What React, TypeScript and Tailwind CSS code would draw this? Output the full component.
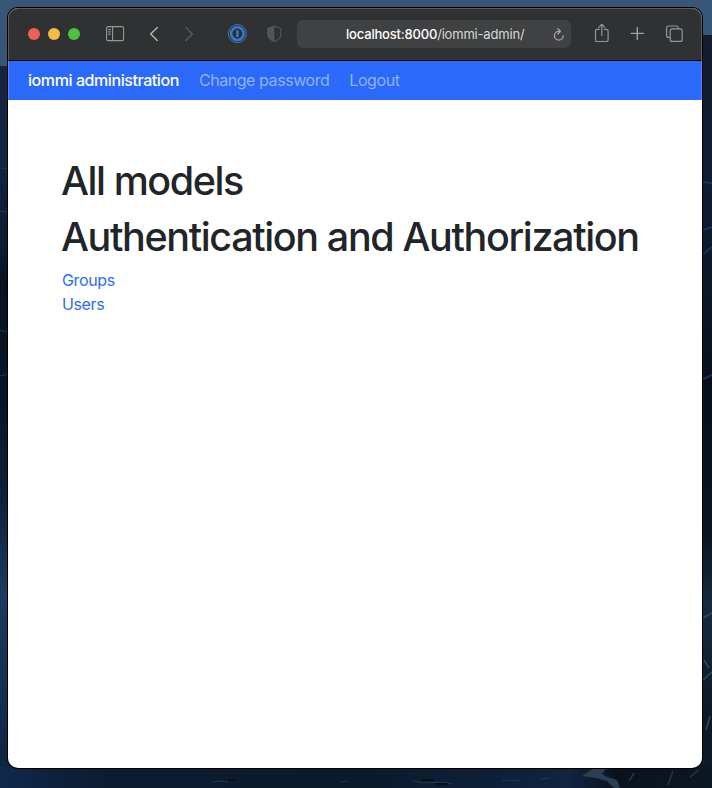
import React from "react";

function Wallpaper() {
  return (
    <svg className="absolute inset-0" width="712" height="788" viewBox="0 0 712 788" aria-hidden="true">
      <defs>
        <linearGradient id="sky" x1="0" y1="0" x2="0" y2="1">
          <stop offset="0" stopColor="#385678" />
          <stop offset="1" stopColor="#34506f" />
        </linearGradient>
        <linearGradient id="left" x1="0" y1="0" x2="0" y2="1">
          <stop offset="0" stopColor="#17233b" />
          <stop offset="0.12" stopColor="#122543" />
          <stop offset="0.26" stopColor="#0e1a2f" />
          <stop offset="0.3" stopColor="#0a1222" />
          <stop offset="0.46" stopColor="#081427" />
          <stop offset="0.62" stopColor="#10243d" />
          <stop offset="0.73" stopColor="#1b3c60" />
          <stop offset="0.88" stopColor="#132e50" />
          <stop offset="1" stopColor="#0c2038" />
        </linearGradient>
        <linearGradient id="right" x1="0" y1="0" x2="0" y2="1">
          <stop offset="0" stopColor="#141c2e" />
          <stop offset="0.2" stopColor="#0e1b33" />
          <stop offset="0.34" stopColor="#0d1828" />
          <stop offset="0.46" stopColor="#070f1a" />
          <stop offset="0.66" stopColor="#0a1420" />
          <stop offset="0.76" stopColor="#172b3f" />
          <stop offset="0.9" stopColor="#0d1825" />
          <stop offset="1" stopColor="#0c1a2b" />
        </linearGradient>
        <linearGradient id="sea" x1="0" y1="0" x2="1" y2="0">
          <stop offset="0" stopColor="#10284a" />
          <stop offset="0.15" stopColor="#0c1b30" />
          <stop offset="0.5" stopColor="#0a192b" />
          <stop offset="0.8" stopColor="#102440" />
          <stop offset="0.87" stopColor="#0a121d" />
          <stop offset="1" stopColor="#0c1724" />
        </linearGradient>
      </defs>
      <rect width="712" height="788" fill="url(#sky)" />
      <rect y="66" width="10" height="722" fill="url(#left)" />
      <rect x="700" y="35" width="12" height="753" fill="url(#right)" />
      <rect y="766" width="712" height="22" fill="url(#sea)" />
      <path d="M0 168l7 1M0 211l7 1M0 330l7 2M0 376l7 -2" stroke="#203a58" strokeWidth="1" />
      <path d="M703 182l9 1M703 230l9 -3M703 254l9 -7M703 379l9 -4" stroke="#1b334e" strokeWidth="2" />
      <path d="M703 618l9 -5M703 680l9 -8M706 730l4 -14M704 660l5 8" stroke="#304a60" strokeWidth="1.5" />
      <path d="M592 769h14l-4 5 5 3 10 3 3 8h-6l-7 -7 -11 -3 -14 -2z" fill="#2b3e52" />
      <path d="M502 781l8 -1 10 1M540 779l10 -1M340 782l8 -1M212 782l8 -1 8 1M413 781l10 2 20 -1 10 2" stroke="#24394f" fill="none" />
      <path d="M422 780h12M228 780h8M436 784h12" stroke="#06101c" strokeWidth="2" />
      <path d="M629 781l5 -8M668 785l5 -14M690 777l9 -7" stroke="#22364a" strokeWidth="1.5" />
    </svg>
  );
}

function Toolbar() {
  return (
    <div className="relative flex h-[53px] items-center border-b border-black bg-[#303132]">
      <div className="ml-5 flex gap-2">
        <i className="size-3 rounded-full bg-[#ee6156]" />
        <i className="size-3 rounded-full bg-[#f5bc42]" />
        <i className="size-3 rounded-full bg-[#4fc141]" />
      </div>
      <svg className="ml-[25px]" width="20" height="18" viewBox="105 25 20 18" fill="none" stroke="#969798" strokeWidth="1.1">
        <rect x="106.6" y="26.6" width="17" height="14" rx="1.7" />
        <path d="M112.6 26.6v14M108.2 29.5h2.6M108.2 31.9h2.6M108.2 34.3h2.6" />
      </svg>
      <svg className="ml-6" width="12" height="18" viewBox="149 25 12 18" fill="none" stroke="#b0b1b1" strokeWidth="1.5" strokeLinecap="round" strokeLinejoin="round">
        <path d="M157.3 27.5l-6.6 6.5 6.6 6.5" />
      </svg>
      <svg className="ml-[22px]" width="12" height="18" viewBox="183 25 12 18" fill="none" stroke="#59595a" strokeWidth="1.5" strokeLinecap="round" strokeLinejoin="round">
        <path d="M185.8 27.5l6.6 6.5-6.6 6.5" />
      </svg>
      <svg className="ml-8" width="20" height="20" viewBox="227 24 20 20" fill="none" stroke="#3a7bd0">
        <circle cx="237.4" cy="33.6" r="9" strokeWidth="1" />
        <circle cx="237.4" cy="33.6" r="6.3" strokeWidth="2.5" />
        <path d="M237.4 30.3v6.6" strokeWidth="2.3" />
      </svg>
      <svg className="ml-[19px]" width="16" height="18" viewBox="266 25 16 18">
        <path d="M274.3 26.2l6.5 2.2v6.4c0 3.2-2.7 5.2-6.5 6.8-3.8-1.6-6.5-3.6-6.5-6.8v-6.4z" fill="none" stroke="#545556" strokeWidth="1.2" />
        <path d="M274.3 26.2v15.4c-3.8-1.6-6.5-3.6-6.5-6.8v-6.4z" fill="#545556" />
      </svg>
      <div className="ml-[15px] flex h-7 w-[274px] items-center rounded-md bg-[#404142] pr-1.5 pl-[49px]">
        <span className="text-[13px] leading-7 tracking-[-0.19px] text-[#d9d9d9]">
          <span className="font-medium text-white">localhost:8000</span>/iommi-admin/
        </span>
        <svg className="ml-auto" width="12" height="14" viewBox="553 27 12 14" fill="none" stroke="#a6a6a7" strokeWidth="1.3" strokeLinecap="round" strokeLinejoin="round">
          <path d="M560 31.4h-1.2a4.4 4.4 0 1 0 4.4 4.4M557.9 28.8l2.6 2.6-2.6 2.6" />
        </svg>
      </div>
      <svg className="ml-[23px]" width="16" height="20" viewBox="594 24 16 20" fill="none" stroke="#969798" strokeWidth="1.2" strokeLinecap="round" strokeLinejoin="round">
        <path d="M599.3 29.3h-2.2c-1 0-1.6.6-1.6 1.6v9c0 1 .6 1.6 1.6 1.6h9.4c1 0 1.6-.6 1.6-1.6v-9c0-1-.6-1.6-1.6-1.6h-2.2M601.8 35.4v-11M598.8 27.3l3-3 3 3" />
      </svg>
      <svg className="ml-5" width="14" height="14" viewBox="630 27 14 14" stroke="#a0a1a2" strokeWidth="1.4" strokeLinecap="round">
        <path d="M631.3 33.4h12M637.3 27.4v12" />
      </svg>
      <svg className="ml-[21px]" width="19" height="19" viewBox="665 25 19 19" fill="none" stroke="#969798" strokeWidth="1.2">
        <rect x="670.2" y="28.8" width="12" height="12.6" rx="2" />
        <path d="M670 37.4h-1.4c-1.2 0-2-.8-2-2v-7.4c0-1.2.8-2 2-2h7.6c1.2 0 2 .8 2 2v.8" />
      </svg>
    </div>
  );
}

export default function App() {
  return (
    <div className="relative h-[788px] w-[712px] overflow-hidden font-['Inter','Liberation_Sans',sans-serif]">
      <Wallpaper />
      <div className="relative mt-2 ml-2 h-[760px] w-[694px] overflow-hidden rounded-[10px] bg-white [box-shadow:0_0_0_1px_#000]">
        <Toolbar />
        <nav className="flex h-[39px] items-center gap-5 bg-[#2a69f9] pb-0.5 pl-5 text-base tracking-[-0.42px] whitespace-nowrap text-[#93b2fc]">
          <a className="font-medium text-white">iommi administration</a>
          <a className="tracking-[-0.44px]">Change password</a>
          <a className="tracking-[-0.44px]">Logout</a>
        </nav>
        <main className="px-[54px] pt-[57px] text-[#212428]">
          <h1 className="mb-2 -ml-px text-[39.5px] leading-12 font-medium tracking-[-1.45px] whitespace-nowrap">All models</h1>
          <h1 className="mb-[7px] -ml-px text-[39.5px] leading-12 font-medium tracking-[-1.38px] whitespace-nowrap">Authentication and Authorization</h1>
          <ul className="text-base tracking-[-0.38px] text-[#2f6bf4]">
            <li><a>Groups</a></li>
            <li><a>Users</a></li>
          </ul>
        </main>
        <div className="pointer-events-none absolute inset-x-0 top-0 h-[92px] rounded-t-[10px] border-x border-t border-white/20" />
      </div>
    </div>
  );
}
